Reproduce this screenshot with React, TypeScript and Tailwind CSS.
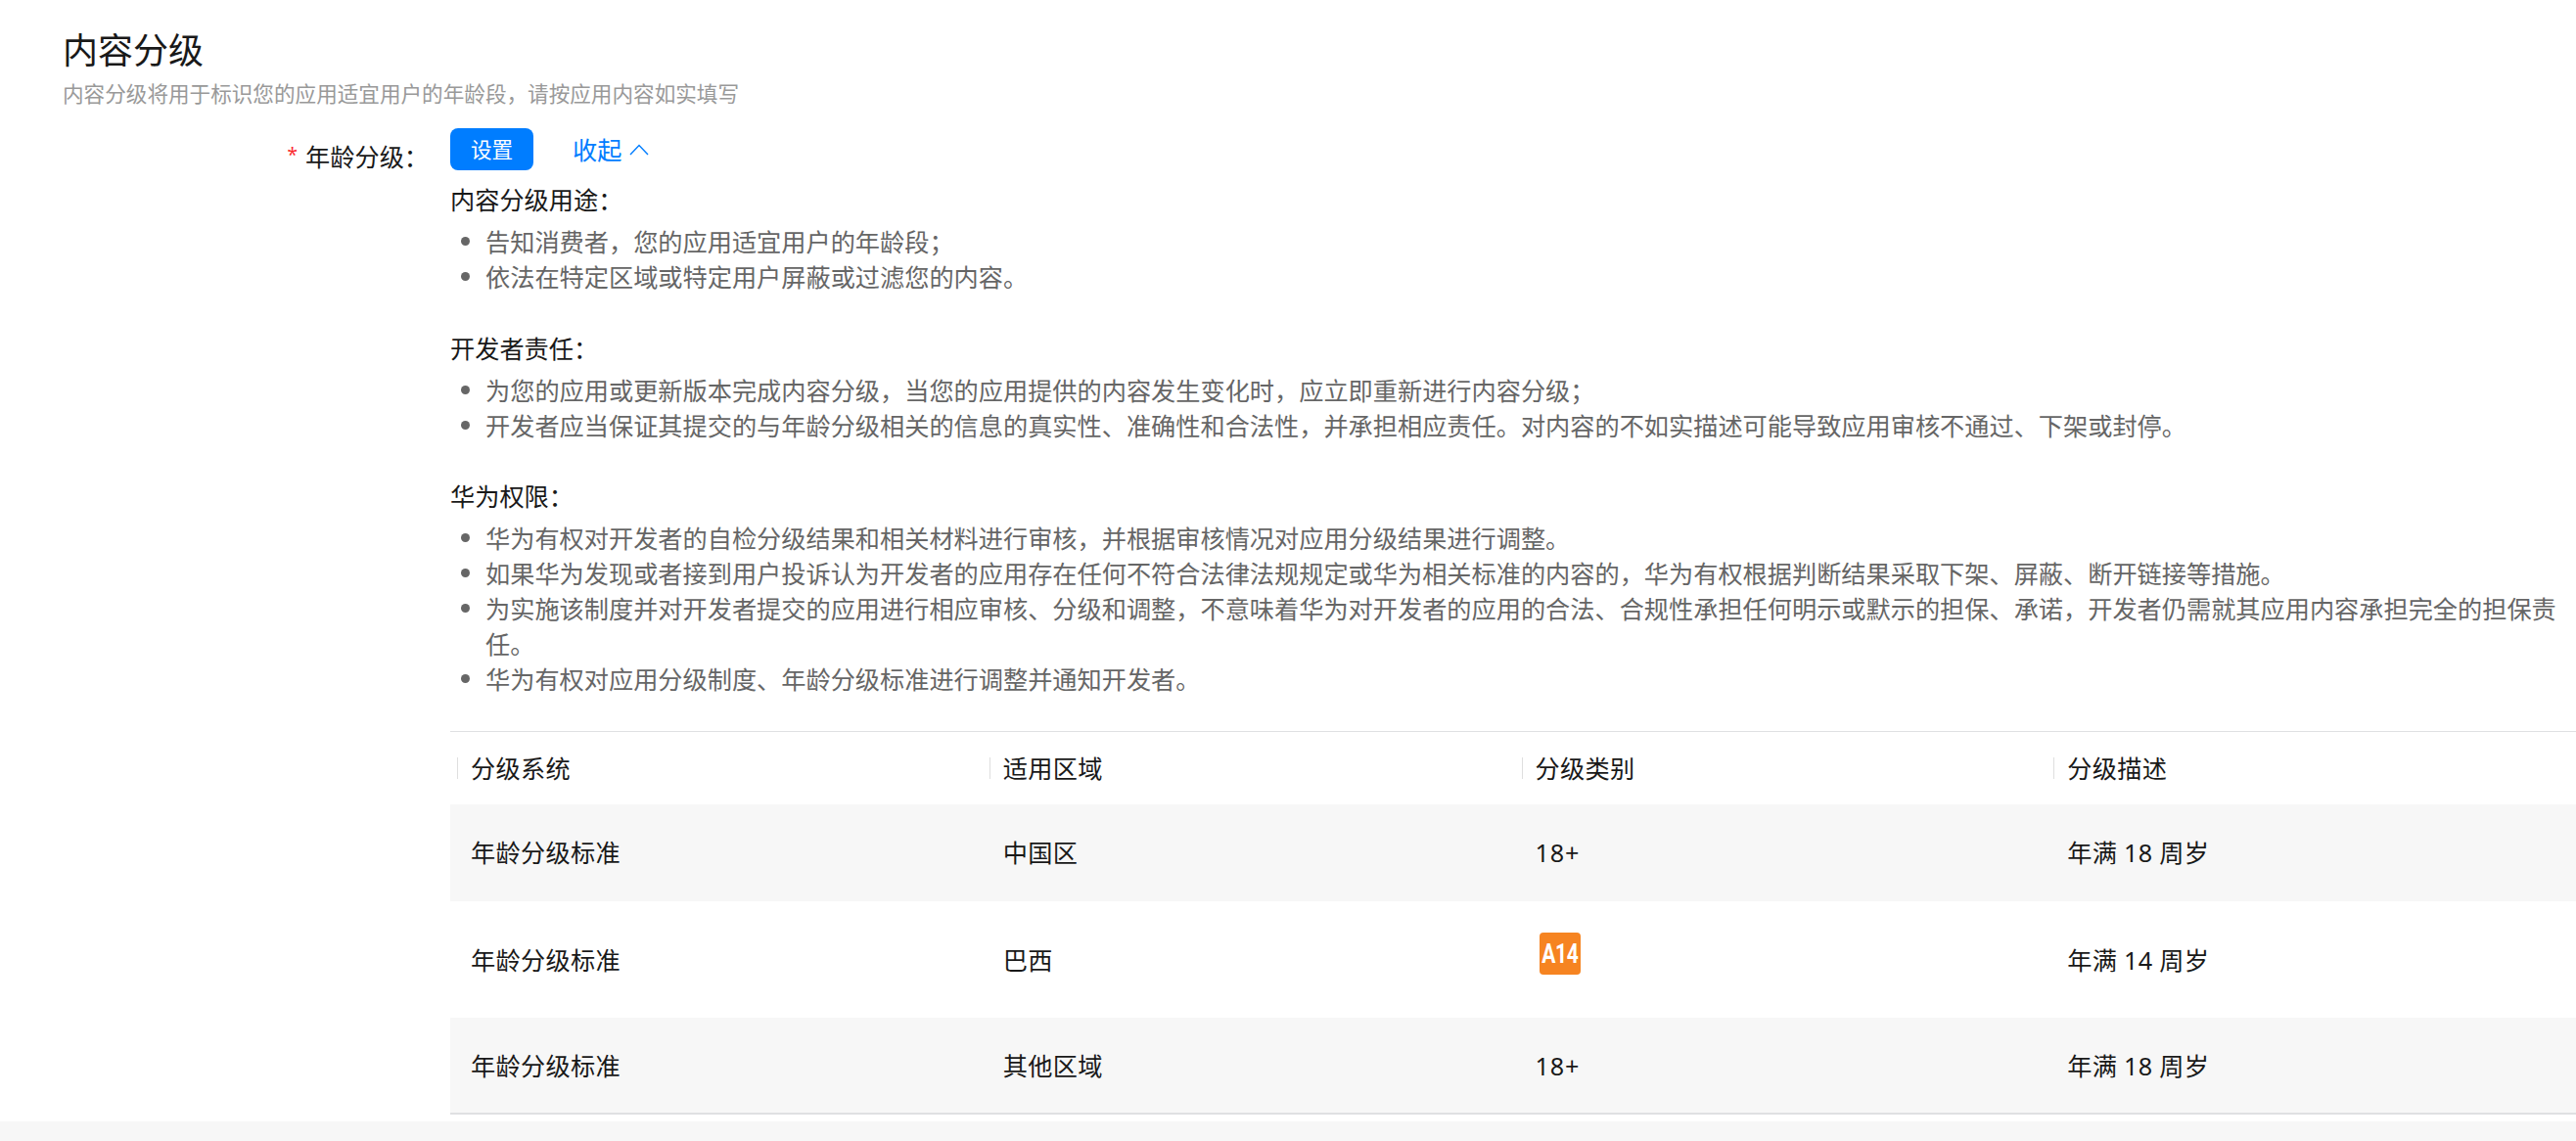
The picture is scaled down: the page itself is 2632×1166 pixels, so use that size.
import React from "react";

const sections = [
  {
    title: "内容分级用途：",
    items: ["告知消费者，您的应用适宜用户的年龄段；", "依法在特定区域或特定用户屏蔽或过滤您的内容。"],
  },
  {
    title: "开发者责任：",
    items: [
      "为您的应用或更新版本完成内容分级，当您的应用提供的内容发生变化时，应立即重新进行内容分级；",
      "开发者应当保证其提交的与年龄分级相关的信息的真实性、准确性和合法性，并承担相应责任。对内容的不如实描述可能导致应用审核不通过、下架或封停。",
    ],
  },
  {
    title: "华为权限：",
    items: [
      "华为有权对开发者的自检分级结果和相关材料进行审核，并根据审核情况对应用分级结果进行调整。",
      "如果华为发现或者接到用户投诉认为开发者的应用存在任何不符合法律法规规定或华为相关标准的内容的，华为有权根据判断结果采取下架、屏蔽、断开链接等措施。",
      "为实施该制度并对开发者提交的应用进行相应审核、分级和调整，不意味着华为对开发者的应用的合法、合规性承担任何明示或默示的担保、承诺，开发者仍需就其应用内容承担完全的担保责任。",
      "华为有权对应用分级制度、年龄分级标准进行调整并通知开发者。",
    ],
  },
];

const columns = ["分级系统", "适用区域", "分级类别", "分级描述"];

const rows = [
  { system: "年龄分级标准", region: "中国区", category: "18+", desc: "年满 18 周岁", cls: "h-[99px] bg-[#f7f7f7] pb-px" },
  { system: "年龄分级标准", region: "巴西", category: "A14", desc: "年满 14 周岁", cls: "h-[119px] bg-white pt-px" },
  { system: "年龄分级标准", region: "其他区域", category: "18+", desc: "年满 18 周岁", cls: "h-[99px] bg-[#f7f7f7] border-b-2 border-[#dfe0e2] pt-[2px]" },
];

function A14Badge() {
  return (
    <span className="mb-[12px] ml-[4px] flex h-[43px] w-[42px] items-center justify-center rounded-[4px] bg-[#f68421]">
      <span className="scale-x-[0.78] pt-[2px] font-['Roboto'] text-[27px] leading-none font-bold tracking-[-0.5px] whitespace-nowrap text-white">A14</span>
    </span>
  );
}

export default function App() {
  return (
    <div className="flex h-[1166px] w-[2632px] flex-col overflow-hidden bg-[#f7f7f7] font-['Noto_Sans','Noto_Sans_CJK_SC',sans-serif] text-[25.2px] leading-[36px] text-[#191919]">
      <main className="h-[1146px] bg-white pt-[27px]">
        <h1 className="pl-[64px] text-[36px] leading-[50px]">内容分级</h1>
        <p className="pt-px pl-[64px] text-[21.6px] leading-[36px] text-[#999999]">
          内容分级将用于标识您的应用适宜用户的年龄段，请按应用内容如实填写
        </p>
        <div className="flex pt-[17px]">
          <div className="flex w-[460px] shrink-0 justify-end gap-[8px] pt-[11px] pr-[22px]">
            <span className="text-[19px] leading-[32px] text-[#fa2a2d]">*</span>
            <span>年龄分级：</span>
          </div>
          <div className="min-w-0 flex-1">
            <div className="flex h-[43px] items-center">
              <button className="h-[43px] w-[85px] rounded-[8px] bg-[#007dff] text-[21.6px] leading-[43px] text-white">设置</button>
              <button className="ml-[40px] flex items-center gap-[8px] text-[#007dff]">
                收起
                <svg width="20" height="12" viewBox="0 0 20 12" fill="none" stroke="currentColor" strokeWidth="1.4">
                  <path d="M1 11L10 1.6L19 11" />
                </svg>
              </button>
            </div>
            <div className="flex flex-col gap-[36.4px] pt-[12px]">
              {sections.map((s) => (
                <section key={s.title}>
                  <h2 className="mb-[7.2px]">{s.title}</h2>
                  <ul className="pr-[18px] text-[#666666]">
                    {s.items.map((t) => (
                      <li key={t} className="flex pl-[11px]">
                        <span className="mt-[13px] mr-[16px] h-[9px] w-[9px] shrink-0 rounded-full bg-[#666666]" />
                        <span>{t}</span>
                      </li>
                    ))}
                  </ul>
                </section>
              ))}
            </div>
            <div className="mt-[34.6px] w-[2175px] border-t border-[#dfe0e2] tracking-[0.3px]">
              <div className="grid h-[74px] grid-cols-4 items-center">
                {columns.map((c) => (
                  <div key={c} className="flex items-center pl-[7px]">
                    <span className="h-[22px] w-px bg-[#dfdfdf]" />
                    <span className="pl-[13px]">{c}</span>
                  </div>
                ))}
              </div>
              {rows.map((r) => (
                <div key={r.region} className={"grid grid-cols-4 items-center " + r.cls}>
                  <div className="pl-[21px]">{r.system}</div>
                  <div className="pl-[21px]">{r.region}</div>
                  <div className="pl-[21px] tracking-[0.9px]">{r.category === "A14" ? <A14Badge /> : r.category}</div>
                  <div className="pl-[21px]">{r.desc}</div>
                </div>
              ))}
            </div>
          </div>
        </div>
      </main>
    </div>
  );
}
